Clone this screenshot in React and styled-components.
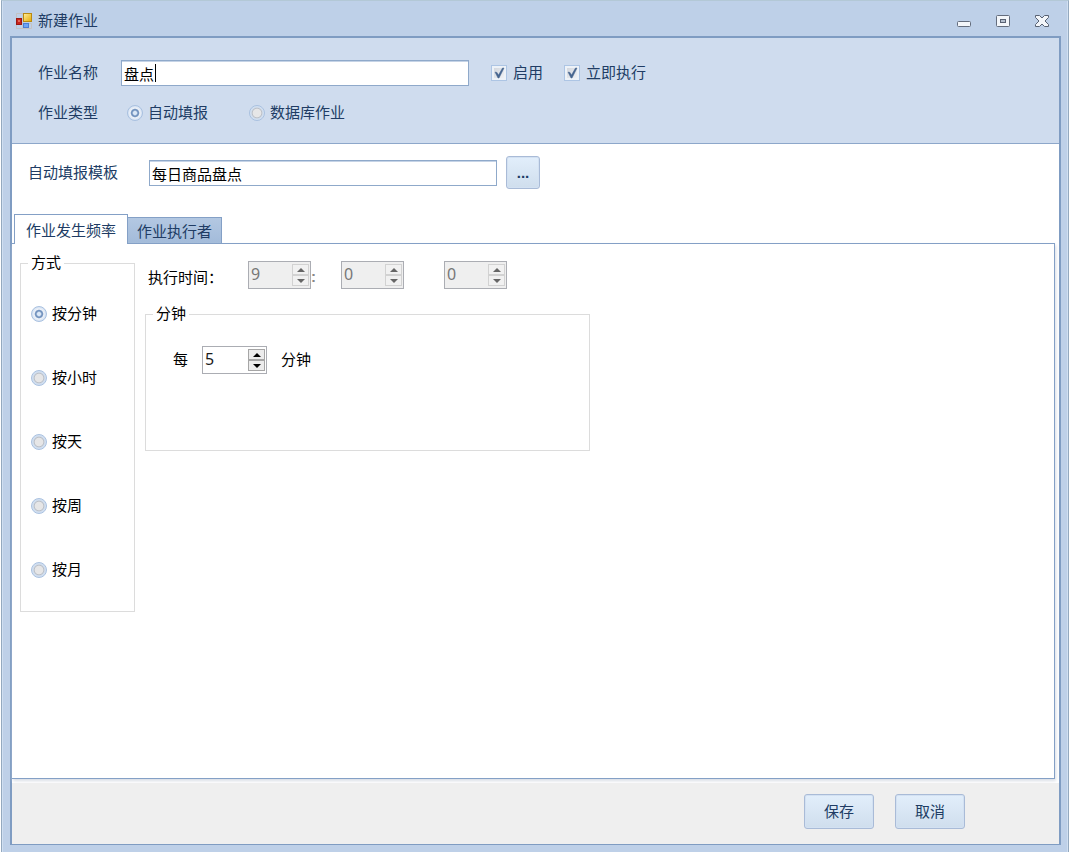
import React, { useState } from 'react';
import styled, { createGlobalStyle, css } from 'styled-components';

const GlobalStyle = createGlobalStyle`
  * {
    box-sizing: border-box;
  }

  body {
    margin: 0;
    background: #fff;
  }

  body, button, input {
    font-family: "Liberation Sans", "Noto Sans CJK SC", sans-serif;
    font-size: 15px;
    line-height: 20px;
    color: #203c64;
  }
`;

// Window frame
const Window = styled.div`
  display: flex;
  flex-direction: column;
  min-height: 100vh;
  margin-left: 1px;
  padding: 0 7px 7px 8px;
  background: #bed0e8;
  border: 1px solid #94a9bf;
  border-top-color: #b3c8d6;
  border-bottom: none;
  box-shadow: inset 1px 0 0 #d0dff1, inset -1px 0 0 #d0dff1;
`;

const TitleBar = styled.header`
  display: flex;
  align-items: center;
  height: 35px;
  padding: 5px 11px 0 5px;
`;

const Title = styled.h1`
  flex: 1;
  margin: 0 0 0 5px;
  font-size: 15px;
  font-weight: normal;
`;

const WindowButtons = styled.div`
  display: flex;
  gap: 23px;
`;

const WindowButton = styled.button`
  display: flex;
  padding: 0;
  border: none;
  background: none;
`;

const Body = styled.main`
  display: flex;
  flex: 1;
  flex-direction: column;
  background: #fff;
  border: 2px solid #7f9cc2;
  border-bottom-width: 1px;
`;

// Form parts
const JobPanel = styled.section`
  display: flex;
  flex-direction: column;
  gap: 17px;
  padding: 22px 26px 20px;
  background: #cfdcee;
  border-bottom: 1px solid #8da7ca;
`;

const Row = styled.div`
  display: flex;
  align-items: center;
`;

const FieldLabel = styled.label`
  width: ${(props) => props.$width};
  flex-shrink: 0;
`;

const TextInput = styled.input`
  width: 100%;
  height: 26px;
  padding: 1px 2px 0;
  color: #000;
  background: #fff;
  border: 1px solid #8fa9ca;
  border-radius: 0;
  box-shadow: inset 0 1px 0 #c5d3e6;
  outline: none;
`;

const InputBox = styled.div`
  position: relative;
  flex: 0 1 348px;
`;

const Caret = styled.span`
  position: absolute;
  top: 4px;
  left: 34px;
  width: 1px;
  height: 18px;
  background: #000;
`;

const Options = styled.div`
  display: flex;
  gap: ${(props) => props.$gap};
  margin-left: ${(props) => props.$left || '0'};
`;

const OptionLabel = styled.label`
  display: flex;
  align-items: center;
  gap: 5px;
  height: 20px;
  color: ${(props) => (props.$dark ? '#000' : 'inherit')};
`;

const Radio = styled.input.attrs({ type: 'radio' })`
  appearance: none;
  flex-shrink: 0;
  width: 16px;
  height: 16px;
  margin: 0;
  border: 1px solid #a9c1e0;
  border-radius: 50%;
  background: radial-gradient(circle closest-side, #e6e6e7 55%, #bcc0c7 68%, #cfdcec 82%, #d5e2f3);

  &:checked {
    background: radial-gradient(circle closest-side, #dbe8f7 22%, #7494bf 42% 52%, #eef2f8 68%, #d5e2f3);
  }
`;

const CheckSquare = styled.span`
  display: grid;
  margin-right: 1px;

  > * {
    grid-area: 1 / 1;
  }

  svg {
    pointer-events: none;
    visibility: hidden;
  }

  input:checked + svg {
    visibility: visible;
  }
`;

const CheckInput = styled.input.attrs({ type: 'checkbox' })`
  appearance: none;
  width: 16px;
  height: 16px;
  margin: 0;
  background: linear-gradient(135deg, #cdd2da, #f5f6f8);
  border: 1px solid #adc5e4;
  box-shadow: inset 0 0 0 2px #edf2f8;
`;

const TemplateRow = styled(Row)`
  padding: 12px 16px 25px;
`;

const Button = styled.button`
  width: ${(props) => props.$width};
  height: ${(props) => props.$height};
  padding: 0;
  background: linear-gradient(#e2eefb, #cfdeed);
  border: 1px solid #a9bbd7;
  border-radius: 3px;
  box-shadow: inset 0 0 0 1px #d3e1f2;
`;

const BrowseButton = styled(Button)`
  margin-left: 9px;
  font-weight: bold;
`;

// Tabs
const TabList = styled.div`
  display: flex;
  align-items: flex-end;
  padding-left: 2px;
`;

const Tab = styled.button`
  height: 26px;
  padding: 3px 9px 0;
  background: linear-gradient(#b3c8e2, #a3bbda);
  border: 1px solid #84a0c6;
  border-bottom: none;
  border-left: none;

  ${(props) =>
    props.$active &&
    css`
      z-index: 1;
      height: 30px;
      margin-bottom: -1px;
      padding: 3px 11px 0;
      background: #fff;
      border-left: 1px solid #84a0c6;
    `}
`;

const TabPanel = styled.section`
  display: flex;
  flex: 1;
  align-items: flex-start;
  gap: 10px;
  margin: 0 4px 4px 0;
  padding: 9px 8px;
  color: #000;
  border: 1px solid #84a0c6;
  border-left: none;
  box-shadow: 1px 2px 3px #d8dde5;
`;

const GroupBox = styled.fieldset`
  min-width: 0;
  margin: 0;
  padding: 0;
  border: 1px solid #dcdcdc;
`;

const Legend = styled.legend`
  margin-left: 7px;
  padding: 0 3px;
`;

const ModeGroup = styled(GroupBox)`
  flex: 0 0 115px;
`;

const ModeList = styled.div`
  display: flex;
  flex-direction: column;
  gap: 44px;
  padding: 31px 10px;
`;

const Schedule = styled.div`
  flex: 0 1 445px;
`;

const TimeRow = styled(Row)`
  margin: 8px 0 15px;
  padding-left: 3px;
`;

const TimeLabel = styled(FieldLabel)`
  padding-top: 6px;
`;

const MinuteRow = styled(Row)`
  gap: 14px;
  padding: 22px 27px 76px;
`;

const SpinBox = styled.span`
  display: flex;
  width: ${(props) => (props.$disabled ? '63px' : '65px')};
  height: 28px;
  padding: 2px 1px;
  background: ${(props) => (props.$disabled ? '#efefef' : '#fff')};
  border: 1px solid #abadb3;
`;

const SpinInput = styled.input`
  flex: 1;
  width: 0;
  min-width: 0;
  height: 20px;
  padding: 0 1px;
  font-family: "Noto Sans", sans-serif;
  font-size: 16px;
  color: #1b1b1b;
  background: transparent;
  border: none;
  outline: none;

  &:disabled {
    color: #777;
  }
`;

const SpinButtons = styled.span`
  display: flex;
  flex-direction: column;
  width: 17px;
`;

const SpinButton = styled.button`
  display: flex;
  flex: 1;
  align-items: center;
  justify-content: center;
  padding: 0;
  color: #000;
  background: #ececec;
  border: 1px solid #a6a6a6;

  &:disabled {
    color: #666;
    background: #f1f1f1;
    border-color: #d2d2d2;
  }
`;

const Separator = styled.span`
  width: ${(props) => props.$width};
  padding-top: 4px;
  font-weight: bold;
  color: #888;
`;

const Footer = styled.footer`
  display: flex;
  justify-content: flex-end;
  gap: 21px;
  padding: 11px 94px 15px;
  background: #efefef;
`;

const AppIcon = () => (
  <svg width="18" height="18" viewBox="0 0 18 18" aria-hidden="true">
    <defs>
      <linearGradient id="gold" x1="0" y1="0" x2="1" y2="1">
        <stop offset="0" stopColor="#fff0a0" />
        <stop offset="1" stopColor="#e5a900" />
      </linearGradient>
    </defs>
    <path d="M1.5 1.5H8V16.5H1.5ZM1.5 11.5H16.5V16.5H1.5Z" fill="none" stroke="#c3c2c4" />
    <rect x="1.5" y="6.5" width="5" height="6" fill="#c8231b" stroke="#9b1712" />
    <rect x="3" y="8" width="2" height="2" fill="#e56a58" />
    <rect x="8.5" y="1.5" width="8" height="8" fill="url(#gold)" stroke="#b98a12" />
    <rect x="8.5" y="11.5" width="5" height="4" fill="#6da4f5" stroke="#4b7ed4" />
  </svg>
);

const MinimizeIcon = () => (
  <svg width="16" height="14" viewBox="0 0 16 14">
    <rect x="1.5" y="7.5" width="13" height="5" rx="1" fill="#f3f6fa" stroke="#646d7d" />
  </svg>
);

const MaximizeIcon = () => (
  <svg width="16" height="14" viewBox="0 0 16 14">
    <rect x="1.5" y="1.5" width="13" height="11" rx="1" fill="#f3f6fa" stroke="#646d7d" />
    <rect x="5.5" y="5.5" width="5" height="3" fill="#b4bfce" stroke="#596273" />
  </svg>
);

const CloseIcon = () => (
  <svg width="16" height="14" viewBox="0 0 16 14">
    <path
      d="M1.5 1.5H5.5L8 4L10.5 1.5H14.5V3.5L11 7L14.5 10.5V12.5H10.5L8 10L5.5 12.5H1.5V10.5L5 7L1.5 3.5Z"
      fill="#f3f6fa"
      stroke="#596273"
      strokeLinejoin="round"
    />
  </svg>
);

const Arrow = ({ down }) => (
  <svg width="8" height="4" viewBox="0 0 8 4" aria-hidden="true">
    <path d={down ? 'M0 0H8L4 4Z' : 'M0 4H8L4 0Z'} fill="currentColor" />
  </svg>
);

const Spinner = ({ id, label, initial, disabled }) => {
  const [value, setValue] = useState(initial);

  return (
    <SpinBox $disabled={disabled}>
      <SpinInput
        id={id}
        aria-label={label}
        value={value}
        disabled={disabled}
        onChange={(e) => setValue(Number(e.target.value) || 0)}
      />
      <SpinButtons>
        <SpinButton type="button" aria-label="增加" disabled={disabled} onClick={() => setValue(value + 1)}>
          <Arrow />
        </SpinButton>
        <SpinButton type="button" aria-label="减少" disabled={disabled} onClick={() => setValue(Math.max(0, value - 1))}>
          <Arrow down />
        </SpinButton>
      </SpinButtons>
    </SpinBox>
  );
};

const Checkbox = ({ children }) => (
  <OptionLabel>
    <CheckSquare>
      <CheckInput defaultChecked />
      <svg width="16" height="16" viewBox="0 0 16 16" aria-hidden="true">
        <path d="M4 7L6 7.5L7.5 10L11.5 3H13L8 13H7Z" fill="#46658f" stroke="#46658f" strokeWidth="0.5" />
      </svg>
    </CheckSquare>
    {children}
  </OptionLabel>
);

const modes = ['按分钟', '按小时', '按天', '按周', '按月'];
const tabs = ['作业发生频率', '作业执行者'];

const App = () => {
  const [tab, setTab] = useState(0);

  return (
    <>
      <GlobalStyle />
      <Window>
        <TitleBar>
          <AppIcon />
          <Title>新建作业</Title>
          <WindowButtons>
            <WindowButton aria-label="最小化"><MinimizeIcon /></WindowButton>
            <WindowButton aria-label="最大化"><MaximizeIcon /></WindowButton>
            <WindowButton aria-label="关闭"><CloseIcon /></WindowButton>
          </WindowButtons>
        </TitleBar>

        <Body>
          <JobPanel>
            <Row>
              <FieldLabel htmlFor="jobName" $width="83px">作业名称</FieldLabel>
              <InputBox>
                <TextInput id="jobName" defaultValue="盘点" />
                <Caret />
              </InputBox>
              <Options $left="22px" $gap="21px">
                <Checkbox>启用</Checkbox>
                <Checkbox>立即执行</Checkbox>
              </Options>
            </Row>
            <Row role="radiogroup" aria-labelledby="jobType">
              <FieldLabel as="span" id="jobType" $width="89px">作业类型</FieldLabel>
              <Options $gap="41px">
                <OptionLabel>
                  <Radio name="jobType" defaultChecked />
                  自动填报
                </OptionLabel>
                <OptionLabel>
                  <Radio name="jobType" />
                  数据库作业
                </OptionLabel>
              </Options>
            </Row>
          </JobPanel>

          <TemplateRow>
            <FieldLabel htmlFor="template" $width="121px">自动填报模板</FieldLabel>
            <InputBox>
              <TextInput id="template" defaultValue="每日商品盘点" />
            </InputBox>
            <BrowseButton type="button" $width="34px" $height="33px" aria-label="选择模板">...</BrowseButton>
          </TemplateRow>

          <TabList role="tablist">
            {tabs.map((name, index) => (
              <Tab
                key={name}
                type="button"
                role="tab"
                aria-selected={tab === index}
                $active={tab === index}
                onClick={() => setTab(index)}
              >
                {name}
              </Tab>
            ))}
          </TabList>
          <TabPanel role="tabpanel">
            <ModeGroup>
              <Legend>方式</Legend>
              <ModeList>
                {modes.map((mode, index) => (
                  <OptionLabel key={mode} $dark>
                    <Radio name="mode" defaultChecked={index === 0} />
                    {mode}
                  </OptionLabel>
                ))}
              </ModeList>
            </ModeGroup>

            <Schedule>
              <TimeRow>
                <TimeLabel htmlFor="hour" $width="100px">执行时间：</TimeLabel>
                <Spinner id="hour" initial={9} disabled />
                <Separator $width="30px">:</Separator>
                <Spinner label="分" initial={0} disabled />
                <Separator $width="40px" />
                <Spinner label="秒" initial={0} disabled />
              </TimeRow>
              <GroupBox>
                <Legend>分钟</Legend>
                <MinuteRow>
                  <label htmlFor="minutes">每</label>
                  <Spinner id="minutes" initial={5} />
                  <span>分钟</span>
                </MinuteRow>
              </GroupBox>
            </Schedule>
          </TabPanel>

          <Footer>
            <Button type="button" $width="70px" $height="35px">保存</Button>
            <Button type="button" $width="70px" $height="35px">取消</Button>
          </Footer>
        </Body>
      </Window>
    </>
  );
};

export default App;
